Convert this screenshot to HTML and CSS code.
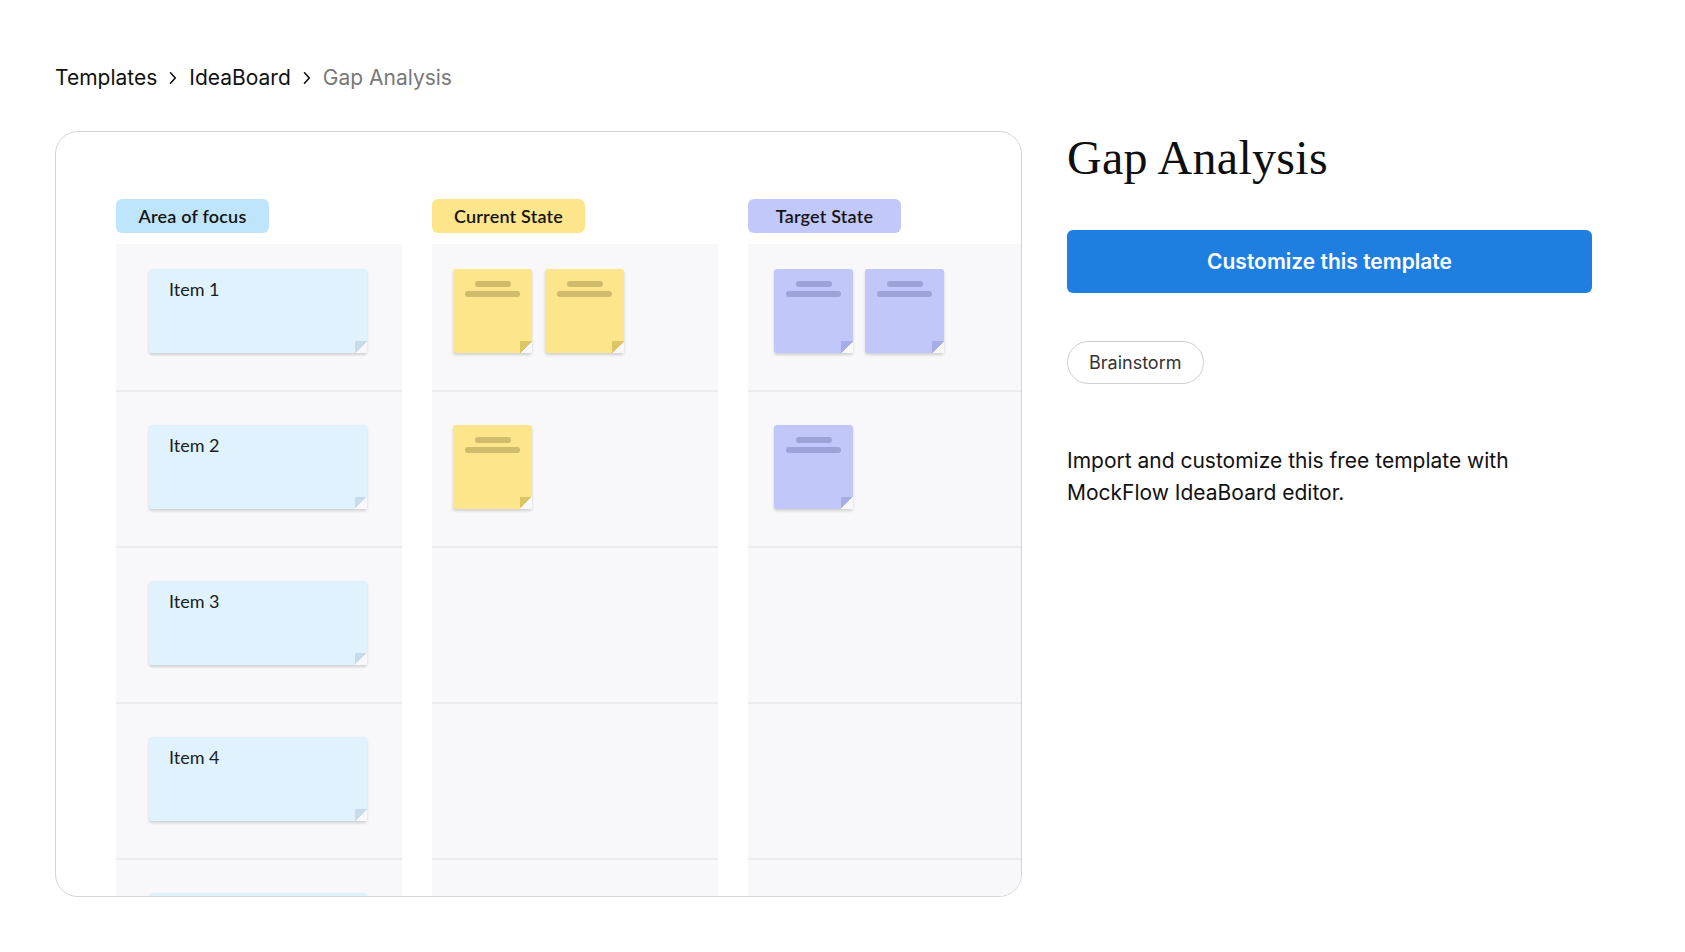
FILE: index.html
```html
<!DOCTYPE html>
<html lang="en">
<head>
<meta charset="utf-8">
<title>Gap Analysis</title>
<link rel="stylesheet" href="styles.css">
</head>
<body>
<div class="page">
  <nav class="crumbs">
    <a href="#">Templates</a>
    <svg class="chev" width="8" height="14" viewBox="0 0 8 14"><path d="M1.5 1.8 L6.3 7 L1.5 12.2" fill="none" stroke="#111" stroke-width="1.6" stroke-linecap="round" stroke-linejoin="round"/></svg>
    <a href="#">IdeaBoard</a>
    <svg class="chev" width="8" height="14" viewBox="0 0 8 14"><path d="M1.5 1.8 L6.3 7 L1.5 12.2" fill="none" stroke="#111" stroke-width="1.6" stroke-linecap="round" stroke-linejoin="round"/></svg>
    <span class="current">Gap Analysis</span>
  </nav>

  <main class="detail">
    <section class="preview">
      <div class="board">
        <div class="col col-blue">
          <div class="label">Area of focus</div>
          <div class="panel">
            <div class="row"><div class="note wide"><span>Item 1</span></div></div>
            <div class="row"><div class="note wide"><span>Item 2</span></div></div>
            <div class="row"><div class="note wide"><span>Item 3</span></div></div>
            <div class="row"><div class="note wide"><span>Item 4</span></div></div>
            <div class="row"><div class="note wide"></div></div>
          </div>
        </div>
        <div class="col col-yellow">
          <div class="label">Current State</div>
          <div class="panel">
            <div class="row">
              <div class="note small"><i class="ln short"></i><i class="ln long"></i></div>
              <div class="note small"><i class="ln short"></i><i class="ln long"></i></div>
            </div>
            <div class="row">
              <div class="note small"><i class="ln short"></i><i class="ln long"></i></div>
            </div>
            <div class="row"></div>
            <div class="row"></div>
            <div class="row"></div>
          </div>
        </div>
        <div class="col col-purple">
          <div class="label">Target State</div>
          <div class="panel">
            <div class="row">
              <div class="note small"><i class="ln short"></i><i class="ln long"></i></div>
              <div class="note small"><i class="ln short"></i><i class="ln long"></i></div>
            </div>
            <div class="row">
              <div class="note small"><i class="ln short"></i><i class="ln long"></i></div>
            </div>
            <div class="row"></div>
            <div class="row"></div>
            <div class="row"></div>
          </div>
        </div>
      </div>
    </section>

    <aside class="info">
      <h1>Gap Analysis</h1>
      <a class="btn" href="#">Customize this template</a>
      <div class="tags"><span class="tag">Brainstorm</span></div>
      <p class="desc">Import and customize this free template with MockFlow IdeaBoard editor.</p>
    </aside>
  </main>
</div>
</body>
</html>
```

FILE: styles.css
```css
* { box-sizing: border-box; }

body {
  margin: 0;
  background: #ffffff;
  color: #111111;
  font-family: Inter, "Noto Sans", "Liberation Sans", sans-serif;
}

.page {
  padding: 66px 0 0 55px;
}

/* breadcrumb */
.crumbs {
  display: flex;
  align-items: center;
  gap: 12px;
  height: 24px;
  font-size: 21px;
  line-height: 24px;
}
.crumbs a {
  color: #111111;
  text-decoration: none;
}
.crumbs .current {
  color: #787878;
}
.chev {
  display: block;
  flex: none;
}

/* layout */
.detail {
  display: flex;
  align-items: flex-start;
  gap: 45px;
  margin-top: 41px;
}

/* preview card */
.preview {
  flex: none;
  width: 967px;
  height: 766px;
  border: 1px solid #d4d4d4;
  border-radius: 23px;
  overflow: hidden;
  padding: 67px 0 0 60px;
}

.board {
  display: grid;
  grid-template-columns: repeat(3, 286px);
  column-gap: 30px;
  font-family: Lato, "Noto Sans", sans-serif;
}

.label {
  width: 153px;
  height: 34px;
  border-radius: 6px;
  display: flex;
  align-items: center;
  justify-content: center;
  font-size: 18px;
  font-weight: 600;
  letter-spacing: 0.2px;
  color: #141414;
}

.panel {
  margin-top: 11px;
  background: #f8f8fa;
}

.row {
  height: 156px;
  border-bottom: 2px solid #ececf0;
  padding-top: 33px;
  display: flex;
  align-items: flex-start;
  gap: 13px;
}
.row:first-child {
  height: 148px;
  padding-top: 25px;
}

.col-blue .row { padding-left: 33px; }
.col-yellow .row { padding-left: 21px; }
.col-purple .row { padding-left: 26px; gap: 12px; }

/* sticky notes */
.note {
  position: relative;
  height: 84px;
  border-radius: 3px;
  box-shadow: 0 2px 3px rgba(0, 0, 0, 0.16);
}
.note::after {
  content: "";
  position: absolute;
  right: 0;
  bottom: 0;
  width: 12px;
  height: 12px;
  background: linear-gradient(to top left, #f8f8fa 50%, var(--fold) 50%);
}

.note.wide {
  width: 218px;
  padding: 8px 0 0 20px;
  font-size: 18px;
  line-height: 24px;
  color: #1c1c1c;
}
.note.small {
  width: 79px;
  display: flex;
  flex-direction: column;
  align-items: center;
  padding-top: 12px;
  gap: 4px;
}
.ln {
  display: block;
  height: 6px;
  border-radius: 3px;
  background: var(--line);
}
.ln.short { width: 36px; }
.ln.long { width: 55px; }

.col-blue .label { background: #bee5fb; }
.col-blue .note { background: #dff2fd; --fold: #c6dcea; }

.col-yellow .label { background: #fde58b; }
.col-yellow .note { background: #fde58b; --fold: #dcc564; --line: #d0bb6c; }

.col-purple .label { background: #c3c8fb; }
.col-purple .note { background: #c2c7fa; --fold: #a7ade6; --line: #9da3d6; }

/* info column */
.info {
  flex: none;
  width: 525px;
  padding-top: 3px;
}

.info h1 {
  margin: 0;
  font-family: "Liberation Serif", "DejaVu Serif", serif;
  font-weight: 400;
  font-size: 48px;
  line-height: 48px;
  letter-spacing: 0.3px;
  color: #0e0e0e;
}

.btn {
  display: flex;
  align-items: center;
  justify-content: center;
  height: 63px;
  margin-top: 48px;
  background: #1f7fe0;
  border-radius: 6px;
  color: #ffffff;
  font-size: 21px;
  font-weight: 600;
  text-decoration: none;
}

.tags {
  display: flex;
  margin-top: 48px;
}
.tag {
  height: 43px;
  padding: 0 21px;
  border: 1px solid #cfcfcf;
  border-radius: 22px;
  display: flex;
  align-items: center;
  font-size: 18px;
  color: #333333;
}

.desc {
  margin: 61px 0 0;
  max-width: 480px;
  font-size: 21px;
  line-height: 32px;
  color: #111111;
}
```
